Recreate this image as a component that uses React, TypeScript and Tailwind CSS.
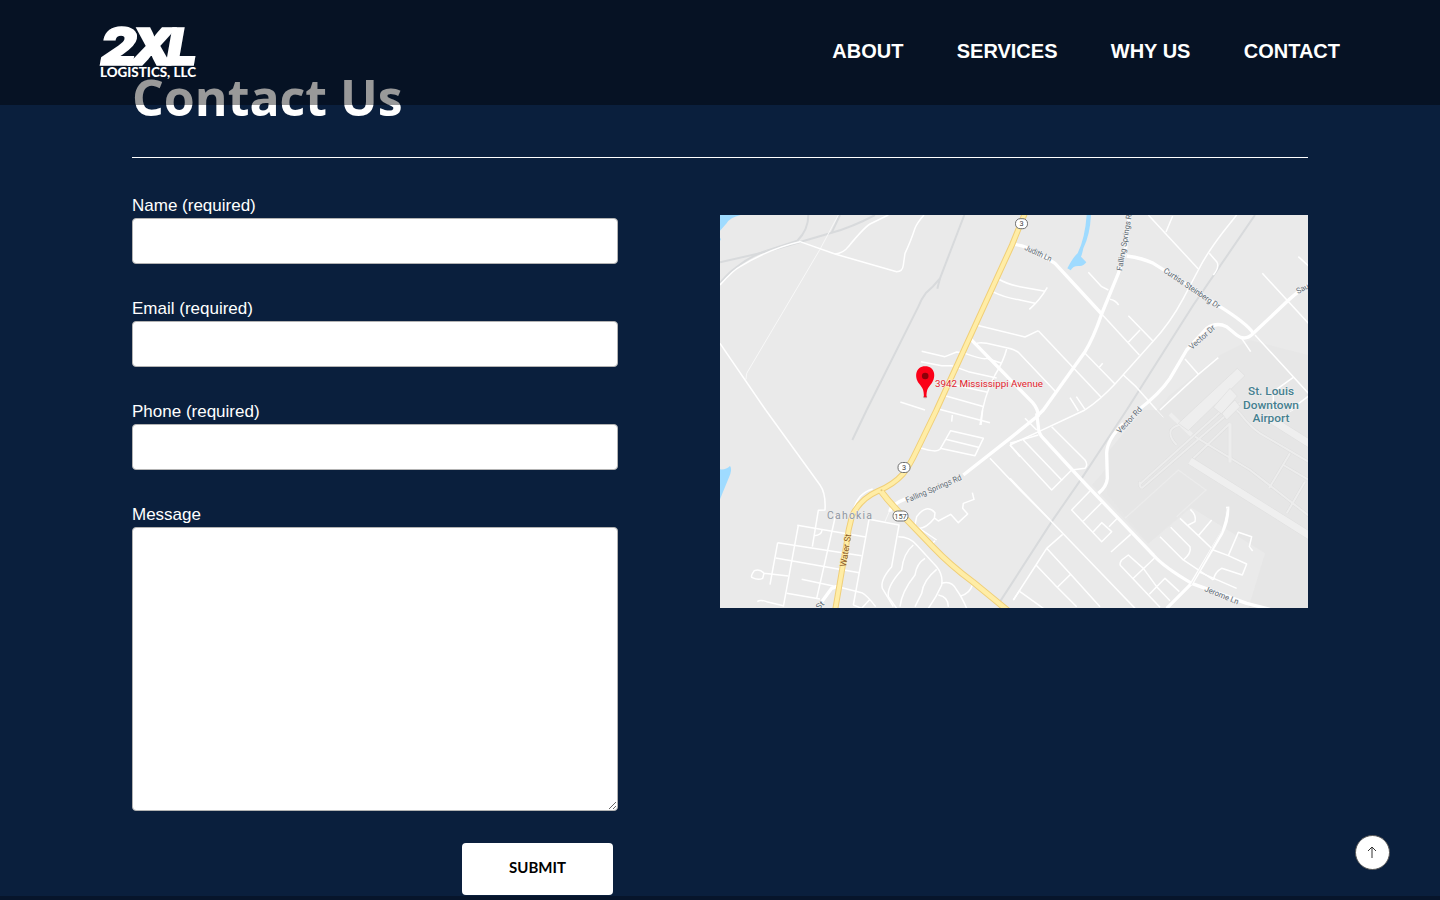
import React from "react";

type Quad = { x: number; y: number; minor?: string[]; thin?: string[]; major?: string[]; rail?: string[] };

const quads: Quad[] = [
  {
    x: 0,
    y: -5,
    rail: [
      "M265 15Q265 60 232 92L140 122",
      "M0 157L140 125L330 70Q400 50 465 15",
      "M0 218Q30 185 45 175Q90 138 140 122",
      "M360 15L335 68",
      "M733 15L660 205L652 236",
      "M660 205Q640 230 617 250Q605 265 595 290L440 600",
    ],
    minor: [
      "M0 225Q40 180 60 170Q150 115 240 95L345 132L530 185Q548 185 550 165L555 130Q570 100 585 55Q590 40 612 15",
      "M345 132Q370 130 385 110Q430 55 450 42L505 15",
      "M0 400L137 600",
      "M835 207Q860 222 900 230L975 244",
      "M818 245Q850 262 900 270L945 280",
      "M768 345L915 381L955 362",
      "M765 403Q775 395 800 400L860 413Q885 418 895 427L1010 548",
      "M605 424L675 440L710 426L735 430Q790 450 800 445L845 460",
      "M603 455L665 467L695 467L745 485L830 504",
      "M860 417Q850 455 825 495Q790 560 780 645",
      "M700 524L803 547",
      "M670 556L792 590",
      "M541 576L615 600",
      "M655 597L810 638",
    ],
    thin: ["M355 15L300 118L80 490L78 508"],
    major: ["M750 385L938 578Q955 598 955 620"],
  },
  {
    x: 290,
    y: -5,
    rail: ["M735 15L550 285L350 600"],
    minor: [
      "M112 232Q90 270 58 298",
      "M85 362L275 563",
      "M235 187L275 230L295 240",
      "M300 268Q315 270 326 285",
      "M275 312L388 435",
      "M355 317L428 392M390 360L355 397",
      "M680 15L640 65Q590 130 565 180L520 265Q480 340 428 395L315 522Q270 570 225 600",
      "M415 15L565 177M488 18L468 66",
      "M598 130L620 155Q630 170 610 195",
      "M225 430L315 522",
      "M268 472L278 460",
      "M340 495L378 530L440 600",
      "M525 447L565 493M625 443L565 493L450 600",
      "M757 190L900 345",
      "M865 140L900 172",
      "M695 385L722 425",
      "M735 375L900 555M850 502L790 545V600",
      "M205 603L180 563M225 598L199 560",
      "M900 555L840 600",
    ],
    major: [
      "M358 15L345 130L325 190L275 312Q250 385 225 425L100 600L80 620",
      "M10 103Q50 105 90 135Q120 150 135 160L275 312",
      "M350 138Q400 145 430 160Q530 220 630 290Q710 340 730 370",
      "M900 222Q860 245 820 285L730 370Q705 395 680 375L650 350Q620 335 590 355L530 420L480 505Q450 550 385 600",
    ],
  },
  {
    x: 0,
    y: 195,
    rail: ["M440 0L397 90"],
    minor: [
      "M137 0L300 225Q318 250 315 300L295 301L277 410",
      "M458 237Q410 250 398 310",
      "M232 346L437 381M173 398L425 437M167 444L418 488",
      "M235 346L190 590M173 398L150 524M347 315L290 565M447 328L400 585",
      "M283 377Q305 375 306 360",
      "M205 498L132 490Q120 475 103 482Q90 500 97 503Q115 512 128 505L132 490",
      "M245 508L350 530M200 550L300 567M112 575Q120 568 140 575L190 587",
      "M345 528L425 548Q440 555 467 590M400 585L425 595L448 570",
      "M447 328L537 345L515 470Q480 510 487 535L520 590",
      "M535 380Q570 380 590 405L650 470Q670 495 665 525Q650 560 625 595",
      "M580 405Q550 430 545 480Q500 530 505 560L530 595",
      "M615 445Q590 460 585 495Q545 545 540 590M650 478Q610 510 605 550L585 590",
      "M665 520Q695 510 710 540Q725 560 740 595M757 525Q750 550 722 558",
      "M655 555Q685 560 685 590",
      "M585 345L590 320Q620 280 645 308L643 325Q615 360 590 355M645 325L655 333L692 313L715 338L743 312L728 295L730 280L762 268L757 248",
      "M583 345L650 390M635 402L645 392",
      "M595 112Q650 130 660 118L692 62L790 85L765 137L660 115M677 88L775 112M697 15L695 35",
      "M788 0L783 45",
      "M870 105L900 140M870 100L955 75",
      "M810 145L900 240L990 330",
      "M880 570L900 540",
    ],
    major: ["M953 18L870 85L730 195", "M560 265Q510 285 510 305", "M300 583L335 535L355 528"],
    thin: ["M510 300L495 335"],
  },
  {
    x: 290,
    y: 195,
    rail: ["M350 0L215 205L125 335L-30 575"],
    minor: [
      "M0 105L75 70L225 0",
      "M45 25L80 60",
      "M125 50L225 150Q235 165 225 175L185 180L155 210",
      "M40 90L155 210L125 240L0 105",
      "M0 205L125 335L375 595",
      "M240 243L185 300L275 395L305 365L275 338L250 365M275 278L220 333M325 322L297 350M303 426L362 373",
      "M158 373L110 415L78 465L10 570M110 415L182 493L270 590M78 465L140 530L200 590M182 493L142 532M30 545L100 595",
      "M335 450L355 435L400 475L440 530L418 553M335 450Q325 465 335 470L450 592M433 445L370 505M418 553L465 505L508 545M440 530L480 572",
      "M450 380L520 450Q545 430 540 410L482 352M520 450L610 510",
      "M510 325L565 377L605 330M541 298Q560 315 555 335L535 345M565 377L610 420L655 437L710 462L697 495L635 475Q615 485 610 510",
      "M655 437L685 367L725 380L718 410L728 423M565 485L680 535",
    ],
    major: [
      "M80 10L85 50Q85 70 100 85L215 210L430 435Q460 470 545 520L710 580L780 598",
      "M340 40Q290 90 290 130L292 205Q290 230 265 250",
      "M470 595L545 520L635 370Q655 330 653 290",
    ],
    thin: ["M440 0L460 22M840 5L850 0"],
  },
];

function Strokes({ kind, color, width }: { kind: "minor" | "thin" | "major" | "rail"; color: string; width: number }) {
  return (
    <g fill="none" stroke={color} strokeWidth={width} strokeLinejoin="round">
      {quads.map((q, i) => (
        <g key={i} transform={`translate(${q.x} ${q.y}) scale(.33333)`}>
          {(q[kind] ?? []).map((d) => (
            <path key={d} d={d} />
          ))}
        </g>
      ))}
    </g>
  );
}

function RoadLabel({ x, y, r, w, children }: { x: number; y: number; r: number; w: number; children: string }) {
  return (
    <text
      transform={`translate(${x} ${y}) rotate(${r})`}
      fontSize="8"
      fill="#5c6972"
      stroke="#f3f3f3"
      strokeWidth="1.2"
      paintOrder="stroke"
      textLength={w}
      lengthAdjust="spacingAndGlyphs"
    >
      {children}
    </text>
  );
}

function Shield({ x, y, w, children }: { x: number; y: number; w: number; children: string }) {
  return (
    <g>
      <rect x={x - w / 2} y={y - 5} width={w} height={10} rx={4.6} fill="#fff" stroke="#707070" strokeWidth="1" />
      <text x={x} y={y + 2.6} fontSize="7.4" fill="#444" textAnchor="middle">
        {children}
      </text>
    </g>
  );
}

const taxiways =
  "M670 -8L690 10Q720 50 750 70L900 158M555 80L720 180L900 320M660 40L550 145M840 130L777 235M820 165L900 212M885 215L830 310M500 105Q475 80 483 60Q495 45 515 45M395 235L690 -20M390 222L660 -20M395 235Q385 225 390 215";

function LocationMap() {
  const highway =
    "M305 -2L292 30L216 196L197 235Q190 250 183 259Q173 270 158 276Q140 284 132 301Q128 315 126.500 329L115 396";
  const route157 = "M160 275Q172 291 187 305L213 332Q230 350 253 367L292 399";
  return (
    <svg viewBox="0 0 588 393" className="block h-[393px] w-[588px] bg-[#eaeaea] font-[Roboto,sans-serif]" role="img" aria-label="Map">
      <path d="M428 329L473 291L588 180V140L530 125L500 140L450 180L372 270Z" fill="#e7e7e7" />
      <g transform="translate(290 195) scale(.33333)">
        <path d="M415 400L540 290L765 430L715 595H900V0H400L290 130V250Z" fill="#e6e6e6" />
        <path d="M345 325L505 180L588 240L500 320" fill="none" stroke="#ececec" strokeWidth="4" />
        <path d={taxiways} fill="none" stroke="#dedede" strokeWidth="9" />
        <path d="M660 40V158" fill="none" stroke="#dedede" strokeWidth="13" />
        <path d={taxiways} fill="none" stroke="#ededed" strokeWidth="6" />
        <path d="M660 40V158" fill="none" stroke="#ededed" strokeWidth="10" />
        <path d="M540 152L900 378M770 20L900 102" fill="none" stroke="#dfdfdf" strokeWidth="24" />
        <path d="M540 152L900 378M770 20L900 102" fill="none" stroke="#efefef" strokeWidth="21" />
        <path d="M480 12L545 75" fill="none" stroke="#eee" strokeWidth="12" />
      </g>
      <g transform="translate(290 -5) scale(.33333)" fill="#eee" stroke="#dedede" strokeWidth="2">
        <path d="M505 640L682 475L705 497L535 662Z" />
        <path d="M610 592L660 535L682 558L635 612ZM635 610L675 570L690 590L650 630Z" />
      </g>
      <g transform="translate(0 -5) scale(.33333)" fill="#9fdbff">
        <path d="M0 15H62Q30 22 20 40L0 62ZM0 83L3 88L0 93Z" />
        <path transform="translate(870 0)" d="M230 15H243Q240 75 220 115Q216 135 213 140L229 157Q220 169 208 168Q190 166 182 181L172 175Q190 140 203 130Q225 85 230 15Z" />
        <path transform="translate(0 600)" d="M0 178Q18 180 30 168Q36 175 31 192L0 268Z" />
      </g>
      <Strokes kind="rail" color="#d8dadc" width={6} />
      <Strokes kind="thin" color="#f8f8f8" width={3} />
      <Strokes kind="minor" color="#fff" width={4.5} />
      <Strokes kind="major" color="#fff" width={10} />
      <path d="M471 370L501 317L507 293" stroke="#e4e4e4" strokeWidth=".6" fill="none" />
      <g fill="none" strokeLinejoin="round">
        <path d={highway} stroke="#f0cf78" strokeWidth="6" />
        <path d={route157} stroke="#f0cf78" strokeWidth="6.400" />
        <path d={highway} stroke="#ffeda6" strokeWidth="4" />
        <path d={route157} stroke="#ffeda6" strokeWidth="4.600" />
      </g>
      <circle cx="161.500" cy="275.300" r="1" fill="#e4c875" />

      <RoadLabel x={304} y={34.5} r={25} w={29}>Judith Ln</RoadLabel>
      <RoadLabel x={402} y={56} r={-80} w={61}>Falling Springs Rd</RoadLabel>
      <RoadLabel x={443} y={57} r={34} w={66}>Curtiss Steinberg Dr</RoadLabel>
      <RoadLabel x={472} y={135} r={-42} w={32}>Vector Dr</RoadLabel>
      <RoadLabel x={578} y={79} r={-28} w={13}>Sau</RoadLabel>
      <RoadLabel x={400} y={219} r={-47} w={33}>Vector Rd</RoadLabel>
      <RoadLabel x={187} y={288} r={-23} w={60}>Falling Springs Rd</RoadLabel>
      <RoadLabel x={484} y={376} r={22} w={36}>Jerome Ln</RoadLabel>
      <RoadLabel x={99} y={395} r={-45} w={8}>St</RoadLabel>
      <text transform="translate(126 352) rotate(-81)" fontSize="8.800" fill="#85531f" stroke="#ffeda6" strokeWidth="1" paintOrder="stroke" textLength="33" lengthAdjust="spacingAndGlyphs">Water St</text>
      <text x="107" y="304" fontSize="10.400" fill="#8e95a0" stroke="#eee" strokeWidth="1" paintOrder="stroke" textLength="45">Cahokia</text>

      <Shield x={301.500} y={8.700} w={12}>3</Shield>
      <Shield x={184} y={252.500} w={12}>3</Shield>
      <Shield x={180.500} y={301} w={15}>157</Shield>

      <g fontSize="11.500" fontWeight="500" fill="#457f8f" stroke="#f0f0f0" strokeWidth="1.200" paintOrder="stroke" textAnchor="middle">
        <text x="551" y="180" textLength="46" lengthAdjust="spacingAndGlyphs">St. Louis</text>
        <text x="551" y="193.500" textLength="56" lengthAdjust="spacingAndGlyphs">Downtown</text>
        <text x="551" y="206.500" textLength="37" lengthAdjust="spacingAndGlyphs">Airport</text>
      </g>
      <ellipse cx="205.200" cy="182" rx="2" ry="1.200" fill="#c88f92" />
      <path d="M203.900 182C203.900 174 202.500 173 199 168.500C194 162 195.500 151.300 205.200 151.300C215 151.300 216.500 162 211.500 168.500C208 173 206.500 174 206.500 182Z" fill="#fb0018" />
      <circle cx="205.200" cy="161" r="3.300" fill="#8c0009" />
      <text x="215" y="171.600" fontSize="9.900" fill="#e2222c" stroke="#f2f2f2" strokeWidth="1" paintOrder="stroke" textLength="108" lengthAdjust="spacingAndGlyphs">3942 Mississippi Avenue</text>
    </svg>
  );
}

function Logo() {
  return (
    <svg viewBox="0 0 100 58" className="h-[58px] w-[100px]" fill="#fff" role="img" aria-label="2XL Logistics, LLC">
      <g fontFamily="Inter, sans-serif" fontWeight="900" fontStyle="italic" fontSize="51.5" stroke="#fff" strokeWidth="1.600">
        <text x="1.500" y="41.200" textLength="36" lengthAdjust="spacingAndGlyphs">2</text>
        <text x="31" y="41.200" textLength="44" lengthAdjust="spacingAndGlyphs">X</text>
        <text x="67.500" y="41.200" textLength="30.500" lengthAdjust="spacingAndGlyphs">L</text>
      </g>
      <text x="1" y="53.400" fontFamily="Lato, sans-serif" fontWeight="900" fontSize="12.2" textLength="96" lengthAdjust="spacingAndGlyphs">LOGISTICS, LLC</text>
    </svg>
  );
}

function Field({ label }: { label: string }) {
  return (
    <label className="block h-[103px] text-[17px] leading-[25px]">
      {label}
      <input type="text" className="block h-[46px] w-[486px] rounded-[4px] border border-[#b3b3b3] bg-white px-3 text-black outline-none" />
    </label>
  );
}

const links = ["ABOUT", "SERVICES", "WHY US", "CONTACT"];

export default function App() {
  return (
    <div className="relative flex h-[900px] w-[1440px] flex-col overflow-hidden bg-[#0a1f3d] font-['Liberation_Sans',Arial,sans-serif] text-white">
      <main className="mx-[132px] h-[896px] pt-[64px]">
        <h1 className="h-[93px] font-['Open_Sans',sans-serif] text-[50px] leading-[66px] font-bold">Contact Us</h1>
        <div className="flex border-t border-white pt-[35px]">
          <form className="w-[588px]" onSubmit={(e) => e.preventDefault()}>
            <Field label="Name (required)" />
            <Field label="Email (required)" />
            <Field label="Phone (required)" />
            <label className="block text-[17px] leading-[25px]">
              Message
              <textarea className="block h-[284px] w-[486px] resize rounded-[4px] border border-[#b3b3b3] bg-white p-3 text-black outline-none" />
            </label>
            <button className="mt-8 ml-[330px] block h-[52px] w-[151px] rounded-[4px] bg-white pb-[3px] font-[Lato,sans-serif] text-[15px] font-bold text-black">SUBMIT</button>
          </form>
          <div className="pt-[22px]">
            <LocationMap />
          </div>
        </div>
      </main>
      <footer className="h-1 bg-[#07152b]" />
      <header className="absolute inset-x-0 top-0 flex h-[105px] justify-between bg-black/40 pr-[100px] pl-[99px]">
        <div className="pt-6">
          <Logo />
        </div>
        <nav className="flex gap-[53.3px] pt-[36px] text-[20px] leading-[30px] font-bold">
          {links.map((l) => (
            <a key={l} href="#">
              {l}
            </a>
          ))}
        </nav>
      </header>
      <button aria-label="Back to top" className="absolute top-[835px] left-[1355px] flex size-[35px] items-center justify-center rounded-full border border-[#555] bg-white">
        <svg viewBox="0 0 11 13" className="h-[13px] w-[11px]" fill="none" stroke="#333" strokeWidth="1">
          <path d="M5 12V1M1 5L5 1L9 5" />
        </svg>
      </button>
    </div>
  );
}
